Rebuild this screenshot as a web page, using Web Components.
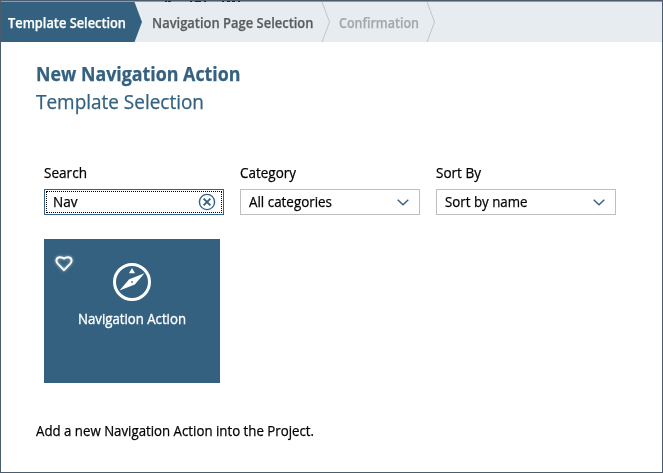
<!DOCTYPE html>
<html lang="en"><head><meta charset="utf-8"><title>New Navigation Action</title>
<style>body{margin:0;font-family:"Open Sans","Noto Sans",sans-serif;font-size:14px;color:#000}</style></head>
<body>
<wizard-dialog>
  <wizard-steps slot="steps"></wizard-steps>
  <wizard-heading></wizard-heading>
  <filter-row>
    <search-field></search-field>
    <select-field label="Category" label-width="56" value="All categories" value-width="83"></select-field>
    <select-field label="Sort By" label-width="45" value="Sort by name" value-width="82.5"></select-field>
  </filter-row>
  <template-tile></template-tile>
  <fit-text slot="description" width="278">Add a new Navigation Action into the Project.</fit-text>
</wizard-dialog>
<script>
const define = (name, html, setup) => customElements.define(name, class extends HTMLElement {
  connectedCallback() {
    if (this.shadowRoot) return;
    this.attachShadow({ mode: 'open' }).innerHTML = typeof html === 'function' ? html(this) : html;
    if (setup) setup(this);
  }
});

// Text condensed horizontally to a given line width.
define('fit-text', `<style>:host{display:block;width:max-content;white-space:nowrap;line-height:20px;-webkit-text-stroke:.25px currentColor}
  span{display:inline-block;transform-origin:0 50%}</style><span><slot></slot></span>`, el => {
  const s = el.shadowRoot.querySelector('span');
  const w = +el.getAttribute('width');
  s.style.transform = `scaleX(${w / s.getBoundingClientRect().width})`;
  el.style.width = w + 'px';
});

define('wizard-dialog', `<style>
  :host{display:flex;flex-direction:column;box-sizing:border-box;width:663px;height:473px;border:1px solid #4b5d6c;background:#fff;overflow:hidden}
  main{flex:1;padding:18px 35px 0}
  footer{padding:0 35px 31px}
</style><slot name="steps"></slot><main><slot></slot></main><footer><slot name="description"></slot></footer>`);

define('wizard-steps', `<style>
  :host{display:grid;grid-template-columns:143px 188px 1fr;height:41px;box-sizing:border-box;background:#e7ecf0;border-top:1px solid #8f9ba6;font-weight:600;position:relative}
  div{display:flex;align-items:center;padding-top:2px}
  .a{color:#fff;padding-left:7px}.b{color:#5c5c5c;padding-left:7.500px}.c{color:#a5a8aa;padding-left:7px}
  svg{position:absolute;left:-1px;top:-2px;width:663px;height:42px}
  fit-text{position:relative}
</style>
<svg viewBox="0 0 663 42"><path d="M1 2H134.500L142 22L134.500 42H1Z" fill="#346180"/>
<path d="M322 2L329.500 22L322 42M427 2L434.500 22L427 42" fill="none" stroke="#bfc5ca"/>
<path d="M165 1.500h2M168 1.500h3M190 1.500h2M195 1.500h6M204 1.500h2M222 1.500h2M227 1.500h3M232 1.500h3M238 1.500h2" stroke="#1c2732"/></svg>
<div class="a"><fit-text width="118">Template Selection</fit-text></div>
<div class="b"><fit-text width="161.5">Navigation Page Selection</fit-text></div>
<div class="c"><fit-text width="80">Confirmation</fit-text></div>`);

define('wizard-heading', `<style>
  :host{display:block;color:#346180;font-size:19.500px}
  fit-text{line-height:28px}
  .t{font-weight:700;font-size:19px}
</style><fit-text class="t" width="204.5">New Navigation Action</fit-text><fit-text width="168">Template Selection</fit-text>`);

define('filter-row', `<style>:host{display:flex;gap:16px;padding:47px 8px 0}</style><slot></slot>`);

const fieldCss = `:host{display:block;width:180px}
  .box{box-sizing:border-box;height:26px;margin-top:6px;border:1px solid #bfbfbf;display:flex;align-items:center;justify-content:space-between;padding:0 8px}
  svg{display:block}`;

define('search-field', `<style>${fieldCss}
  .box{border-color:#346187;padding:1px}
  .focus{box-sizing:border-box;flex:1;height:22px;border:1px dotted #000;display:flex;align-items:center;justify-content:space-between;padding:0 5px 0 6px}
</style><fit-text width="43">Search</fit-text>
<div class="box"><div class="focus"><fit-text width="24.5">Nav</fit-text>
<svg width="18" height="18" viewBox="0 0 18 18" fill="none" stroke="#346187"><circle cx="9" cy="9" r="7.600" stroke-width="1.400"/><path d="M5.600 5.600L12.400 12.400M12.400 5.600L5.600 12.400" stroke-width="1.900"/></svg></div></div>`);

define('select-field', el => `<style>${fieldCss}</style>
<fit-text width="${el.getAttribute('label-width')}">${el.getAttribute('label')}</fit-text>
<div class="box"><fit-text width="${el.getAttribute('value-width')}">${el.getAttribute('value')}</fit-text>
<svg width="16" height="16" viewBox="0 0 16 16" fill="none" stroke="#346187" stroke-width="1.400"><path d="M2.700 5.700L8 10.800L13.300 5.700"/></svg></div>`);

define('template-tile', `<style>
  :host{display:flex;flex-direction:column;align-items:center;box-sizing:border-box;width:176px;height:144px;margin:24px 0 0 8px;padding-top:23px;background:#346180;color:#fff;position:relative}
  .heart{position:absolute;left:9px;top:14px;filter:drop-shadow(0 0 1.500px #ffffff99);overflow:visible}
  fit-text{margin-top:7px;-webkit-text-stroke:.35px #fff}
</style>
<svg class="heart" width="22" height="22" viewBox="0 0 22 22" fill="none" stroke="#fff" stroke-width="1.900" stroke-linejoin="round"><path d="M11 17.200L4.700 10.600C2.300 7.900 3.500 4.200 6.800 4.200C8.800 4.200 10.200 4.700 11 5.700C11.800 4.700 13.200 4.200 15.200 4.200C18.500 4.200 19.700 7.900 17.300 10.600Z"/></svg>
<svg width="40" height="40" viewBox="0 0 40 40"><circle cx="20" cy="20" r="17.500" fill="none" stroke="#fff" stroke-width="3"/>
<path d="M20 6L23 11.200H17Z" fill="#fff"/><path fill-rule="evenodd" d="M32.500 11.200L22.800 22.600L7.500 28.500L17.200 17.200ZM20 19.300a.8.8 0 1 0 .01 0Z" fill="#fff"/></svg>
<fit-text width="108">Navigation Action</fit-text>`);
</script>
</body></html>
